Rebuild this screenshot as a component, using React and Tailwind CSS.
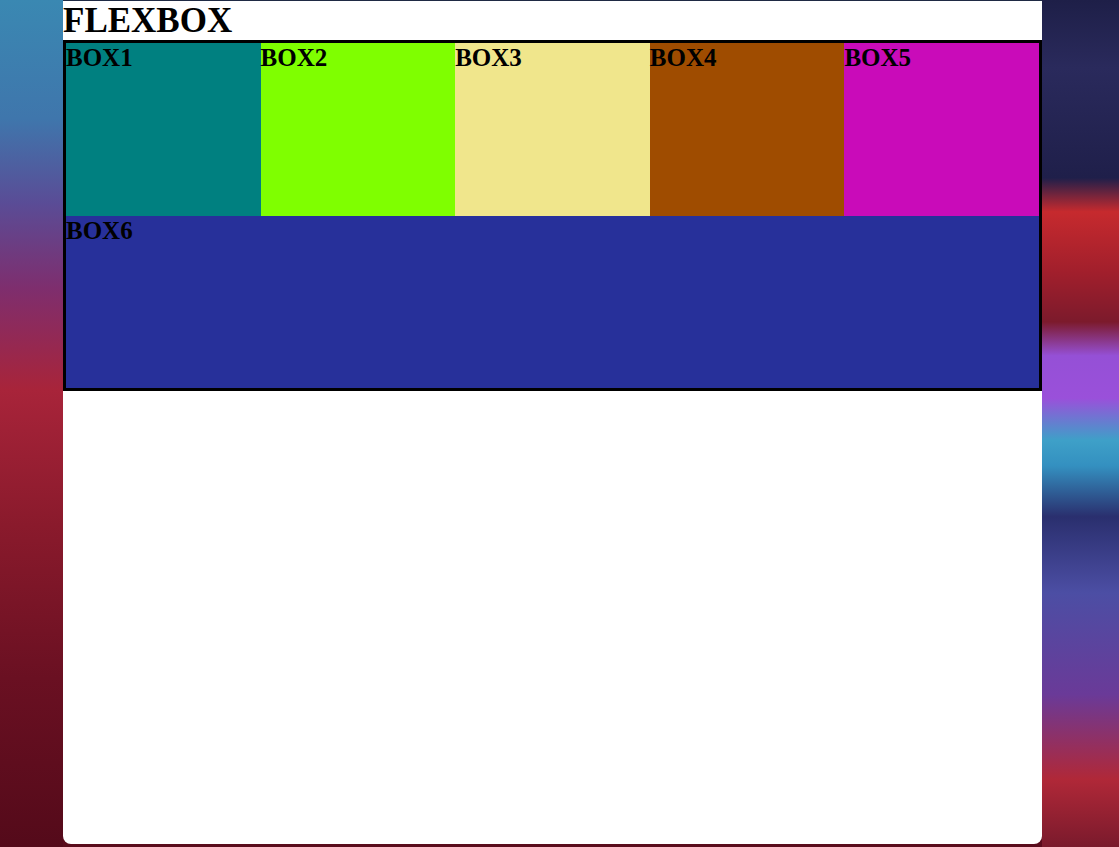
import React from "react";

const boxes = [
  { name: "BOX1", color: "bg-[#008080]" },
  { name: "BOX2", color: "bg-[#7fff00]" },
  { name: "BOX3", color: "bg-[#f0e68c]" },
  { name: "BOX4", color: "bg-[#9f4c00]" },
  { name: "BOX5", color: "bg-[#c90bb9]" },
];

function App() {
  return (
    <div className="flex w-full h-[847px] overflow-hidden bg-[#5a0c1c]">
      {/* wallpaper, left side */}
      <div className="w-[63px] shrink-0 bg-[linear-gradient(180deg,#3a88b2_0%,#3f76ac_14%,#5a4c96_24%,#7e2e6e_34%,#a8243a_46%,#8a1a2c_62%,#6a1022_80%,#540a1a_100%)]" />

      {/* browser page */}
      <div className="w-[979px] shrink-0 h-[844px] bg-white border-t border-[#1f2a44] rounded-b-[8px] font-['Liberation_Serif',serif] text-black">
        <h1 className="m-0 text-[35px] leading-[39px] font-bold">FLEXBOX</h1>
        <div className="flex flex-wrap border-[3px] border-black">
          {boxes.map((b) => (
            <div key={b.name} className={`w-1/5 h-[173px] ${b.color}`}>
              <h2 className="m-0 text-[25px] font-bold leading-[27px] pt-px">{b.name}</h2>
            </div>
          ))}
          <div className="w-full h-[172px] bg-[#27309a]">
            <h2 className="m-0 text-[25px] font-bold leading-[27px] pt-px">BOX6</h2>
          </div>
        </div>
      </div>

      {/* wallpaper, right side */}
      <div className="flex-1 bg-[linear-gradient(180deg,#1e1f48_0%,#2a2a5c_8%,#1f1f4a_21%,#c62a2e_25%,#a21f2c_32%,#7c1a2c_38%,#9550d6_42%,#9a50da_47%,#3ea0c8_52%,#3490c0_55%,#2a2f6e_61%,#4c4ea4_70%,#6a3a98_82%,#b02838_92%,#7a1a2c_100%)]" />
    </div>
  );
}

export default App;
